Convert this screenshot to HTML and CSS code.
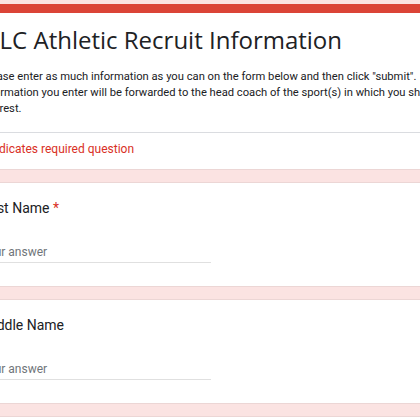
FILE: index.html
```html
<!DOCTYPE html>
<html lang="en">

<head>
    <meta charset="utf-8">
    <title>MLC Athletic Recruit Information</title>
    <link rel="stylesheet" href="styles.css">
</head>

<body>
    <form class="form">
        <div class="card header">
            <h1 class="title">MLC Athletic Recruit Information</h1>
            <p class="desc">Please enter as much information as you can on the form below and then click "submit".&nbsp; The<br>
                information you enter will be forwarded to the head coach of the sport(s) in which you show<br>
                interest.</p>
            <p class="required">* Indicates required question</p>
        </div>

        <div class="card question">
            <label class="q-title" for="first">First Name <span class="star">*</span></label>
            <input class="answer" id="first" type="text" placeholder="Your answer">
        </div>

        <div class="card question">
            <label class="q-title" for="middle">Middle Name</label>
            <input class="answer" id="middle" type="text" placeholder="Your answer">
        </div>

        <div class="card question">
            <label class="q-title" for="last">Last Name <span class="star">*</span></label>
            <input class="answer" id="last" type="text" placeholder="Your answer">
        </div>
    </form>
</body>
</html>
```

FILE: styles.css
```css
* {
    margin: 0;
    padding: 0;
    box-sizing: border-box;
}

body {
    background: #fbe3e2;
    font-family: Roboto, "Liberation Sans", sans-serif;
    color: #202124;
    overflow: hidden;
}

.form {
    width: 680px;
    margin-left: -44px;
    padding-top: 4px;
}

.card {
    background: #fff;
    border: 1px solid #ecd6d5;
    border-radius: 8px;
    margin-bottom: 12px;
}

.header {
    border-top: 9px solid #db4437;
}

.title {
    font-family: "Open Sans", Roboto, sans-serif;
    font-weight: 400;
    font-size: 24px;
    line-height: 32px;
    padding: 11px 24px 0 21px;
}

.desc {
    font-size: 11.2px;
    line-height: 16px;
    margin-top: 13px;
    padding: 0 24px 15px;
    border-bottom: 1px solid #dadce0;
    white-space: nowrap;
}

.required {
    color: #d93025;
    font-size: 12px;
    line-height: 16px;
    padding: 8px 24px 12px;
}

.question {
    padding: 15px 24px 23px;
    display: flex;
    flex-direction: column;
}

.q-title {
    font-size: 14px;
    line-height: 20px;
    color: #202124;
}

.star {
    color: #d93025;
}

.answer {
    width: 230px;
    margin-top: 26px;
    border: none;
    border-bottom: 1px solid #e0e0e0;
    padding: 0 0 2px;
    font-family: Roboto, sans-serif;
    font-size: 12px;
    line-height: 16px;
    outline: none;
}

.answer::placeholder {
    color: #70757a;
}
```
